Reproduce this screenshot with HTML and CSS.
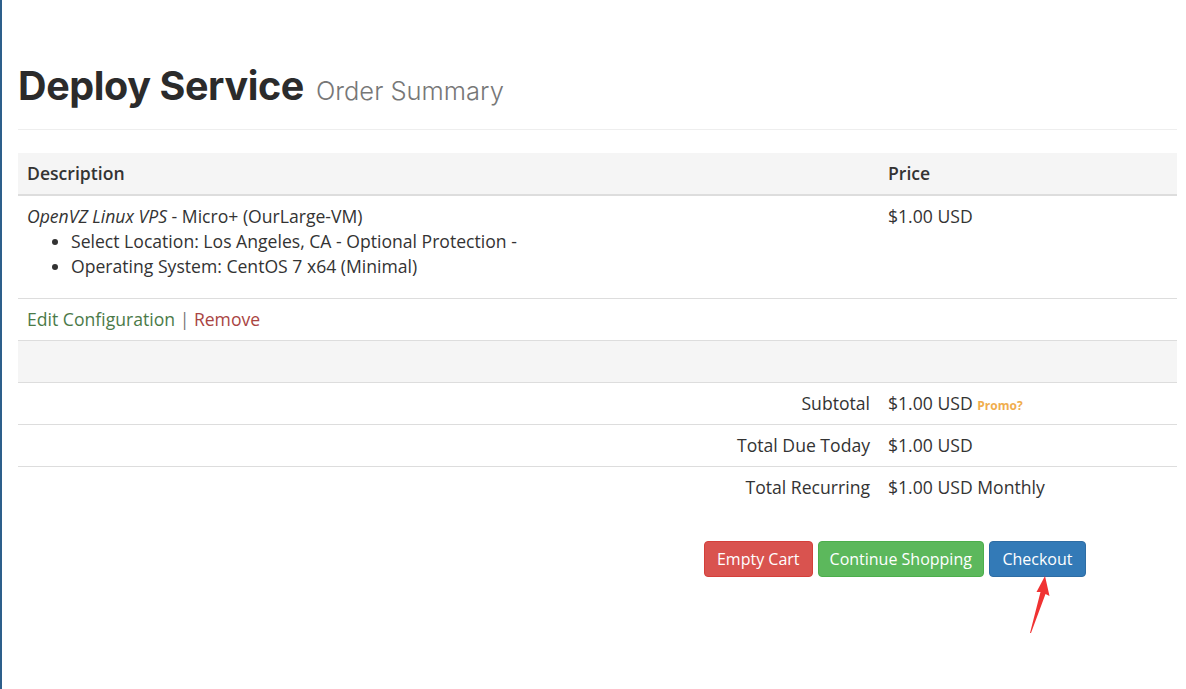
FILE: index.html
```html
<!DOCTYPE html>
<html>
<head>
<meta charset="utf-8">
<link rel="stylesheet" href="styles.css">
</head>
<body>
<div class="page">
  <div class="header">
    <h1 class="title">Deploy Service <small class="subtitle">Order Summary</small></h1>
  </div>
  <table class="cart">
    <thead>
      <tr><th class="col-desc">Description</th><th class="col-price">Price</th></tr>
    </thead>
    <tbody>
      <tr class="item">
        <td>
          <em>OpenVZ Linux VPS</em> - Micro+ (OurLarge-VM)
          <ul class="opts">
            <li>Select Location: Los Angeles, CA - Optional Protection -</li>
            <li>Operating System: CentOS 7 x64 (Minimal)</li>
          </ul>
        </td>
        <td>$1.00 USD</td>
      </tr>
      <tr>
        <td colspan="2"><a class="edit">Edit Configuration</a> <span class="sep">|</span> <a class="remove">Remove</a></td>
      </tr>
      <tr class="blank"><td colspan="2">&nbsp;</td></tr>
      <tr class="total"><td class="label">Subtotal</td><td>$1.00 USD <a class="promo">Promo?</a></td></tr>
      <tr class="total"><td class="label">Total Due Today</td><td>$1.00 USD</td></tr>
      <tr class="total"><td class="label">Total Recurring</td><td>$1.00 USD Monthly</td></tr>
    </tbody>
  </table>
  <div class="actions">
    <button class="btn btn-red">Empty Cart</button>
    <button class="btn btn-green">Continue Shopping</button>
    <button class="btn btn-blue">Checkout</button>
  </div>
</div>
<svg class="arrow" width="40" height="70" viewBox="0 0 40 70">
  <path d="M25 4 L29.5 24 L25.5 22 L11 61 L10 61 L20.5 20 L16.5 20 Z" fill="#f03232"/>
</svg>
</body>
</html>
```
FILE: styles.css
```css
html, body { margin: 0; padding: 0; background: #fff; }
body {
  font-family: "Open Sans", "Liberation Sans", sans-serif;
  font-size: 17.6px;
  color: #333;
  border-left: 2px solid #2d5f8b;
  min-height: 689px;
  box-sizing: border-box;
  position: relative;
}
.page { padding: 0 9px 0 16px; }
.header {
  padding-top: 62px;
  padding-bottom: 14px;
  border-bottom: 1px solid #eee;
  margin-bottom: 23px;
}
.title {
  margin: 0;
  font-family: "Inter", "Lato", sans-serif;
  font-weight: 700;
  font-size: 39.5px;
  line-height: 48px;
  letter-spacing: -0.4px;
  color: #2b2b2b;
}
.subtitle {
  font-family: "Inter", "Lato", sans-serif;
  font-weight: 300;
  font-size: 25.5px;
  color: #777;
  letter-spacing: 0;
  margin-left: 3px;
}
.cart { width: 100%; border-collapse: collapse; }
.cart th, .cart td {
  padding: 8px 9px;
  line-height: 25px;
  text-align: left;
  vertical-align: top;
  border-top: 1px solid #ddd;
}
.cart thead th {
  background: #f5f5f5;
  border-top: 0;
  border-bottom: 2px solid #ddd;
  font-weight: 600;
}
.col-price { width: 280px; }
.opts { margin: 0 0 11px; padding-left: 44px; }
.edit { color: #4b7a48; }
.remove { color: #a94442; }
.sep { color: #777; }
.blank td { background: #f5f5f5; }
.total .label { text-align: right; }
.promo { color: #f0ad4e; font-weight: 700; font-size: 12px; line-height: 1; vertical-align: baseline; }
.actions {
  display: flex;
  justify-content: flex-end;
  gap: 5px;
  padding-top: 33px;
  padding-right: 91px;
}
.btn {
  font-family: "Open Sans", "Liberation Sans", sans-serif;
  font-size: 16px;
  color: #fff;
  border: 1px solid transparent;
  border-radius: 4px;
  height: 36px;
  padding: 0 12px;
  cursor: pointer;
}
.btn-red { background: #d9534f; border-color: #d43f3a; }
.btn-green { background: #5cb85c; border-color: #4cae4c; padding: 0 11px; }
.btn-blue { background: #337ab7; border-color: #2e6da4; padding: 0 12.5px; }
.arrow { position: absolute; left: 1018px; top: 572px; }
```
